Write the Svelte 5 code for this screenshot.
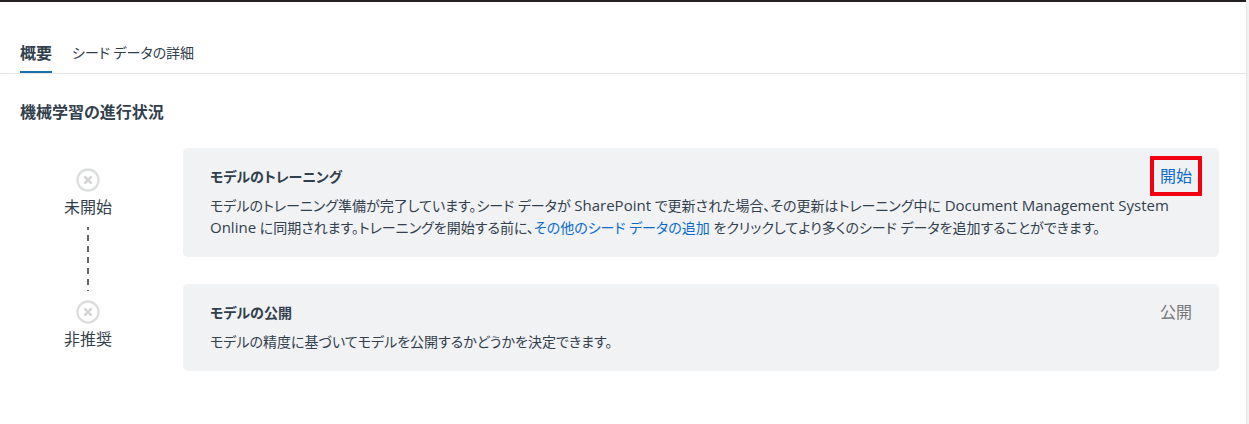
<script lang="ts">
	interface IStep {
		id: string;
		status: string;
	}

	let activeTab = 'overview';

	const tabs = [
		{ id: 'overview', label: '概要' },
		{ id: 'seed', label: 'シード データの詳細' }
	];

	const steps: IStep[] = [
		{ id: 'training', status: '未開始' },
		{ id: 'publish', status: '非推奨' }
	];
</script>

<main>
	<div class="tabs" role="tablist">
		{#each tabs as tab (tab.id)}
			<button
				class="tab"
				role="tab"
				class:active={activeTab === tab.id}
				aria-selected={activeTab === tab.id}
				on:click={() => (activeTab = tab.id)}
			>
				{tab.label}
			</button>
		{/each}
	</div>

	<section>
		<h2>機械学習の進行状況</h2>
		<div class="progress">
			<div class="steps">
				{#each steps as step, i (step.id)}
					{#if i > 0}
						<div class="line"></div>
					{/if}
					<svg width="24" height="24" viewBox="0 0 24 24" fill="none" aria-hidden="true">
						<circle cx="12" cy="12" r="10.5" stroke="#dcdede" stroke-width="2.3" />
						<path d="M8.4 8.4l7.2 7.2M15.6 8.4l-7.2 7.2" stroke="#d2d4d4" stroke-width="2.3" />
					</svg>
					<span class="status">{step.status}</span>
				{/each}
			</div>

			<div class="cards">
				<article>
					<header>
						<h3>モデルのトレーニング</h3>
						<button class="action marked">開始</button>
					</header>
					<p>
						モデルのトレーニング準備が完了しています。シード データが <span class="latin">SharePoint</span> で更新された場合、その更新はトレーニング中に <span class="latin">Document Management System</span><br />
						<span class="latin">Online</span> に同期されます。トレーニングを開始する前に、<a href="#seed">その他のシード データの追加</a> をクリックしてより多くのシード データを追加することができます。
					</p>
				</article>
				<article>
					<header>
						<h3>モデルの公開</h3>
						<button class="action" disabled>公開</button>
					</header>
					<p>モデルの精度に基づいてモデルを公開するかどうかを決定できます。</p>
				</article>
			</div>
		</div>
	</section>
</main>

<style>
	:global(body) {
		background: #f1f2f2;
	}

	main {
		box-sizing: border-box;
		min-height: 100vh;
		margin-right: 2px;
		padding-top: 32px;
		background: #fff;
		border-right: 1px solid #e4e5e6;
		box-shadow: inset 0 2px #231f20;
		color: #32404d;
		font-family: 'Open Sans', 'Noto Sans CJK JP', sans-serif;
		font-size: 16px;
		line-height: 22px;
		font-feature-settings: 'palt';
	}

	button {
		padding: 0;
		border: none;
		background: none;
		color: inherit;
		font: inherit;
		font-feature-settings: inherit;
		cursor: pointer;
	}

	.tabs {
		display: flex;
		gap: 20px;
		padding: 0 20px;
		border-bottom: 1px solid #e4e5e6;
	}

	.tab {
		padding: 10px 0 7px;
		border-bottom: 2px solid transparent;
		font-size: 14px;
	}

	.tab.active {
		border-color: #1a6fa8;
		font-size: 16px;
		font-weight: bold;
	}

	section {
		padding: 27px 27px 53px 20px;
	}

	h2,
	h3,
	p {
		margin: 0;
	}

	h2 {
		font-size: 16px;
	}

	h3,
	p {
		font-size: 14px;
	}

	.latin {
		font-size: 15px;
		line-height: 20px;
	}

	.progress {
		display: flex;
		margin-top: 25px;
	}

	.steps {
		display: flex;
		flex-direction: column;
		align-items: center;
		width: 136px;
		margin-right: 27px;
		padding: 20px 0 21px;
		box-sizing: border-box;
		flex-shrink: 0;
	}

	.status {
		margin-top: 4px;
	}

	.line {
		flex: 1;
		width: 2px;
		margin: 9px 0;
		background: repeating-linear-gradient(#666 0 3px, transparent 3px 8px, #666 8px 11px);
	}

	.cards {
		display: flex;
		flex: 1;
		flex-direction: column;
		gap: 27px;
	}

	article {
		padding: 18px 27px;
		border-radius: 5px;
		background: #f1f2f4;
	}

	header {
		display: flex;
		justify-content: space-between;
		align-items: flex-start;
		margin-bottom: 7px;
	}

	.action {
		color: #0b6bcb;
		line-height: 20px;
	}

	.action:disabled {
		color: #75787b;
		cursor: default;
	}

	.marked {
		outline: 4px solid #f00010;
		outline-offset: 6px;
	}

	a {
		color: #0b6bcb;
		text-decoration: none;
	}
</style>
